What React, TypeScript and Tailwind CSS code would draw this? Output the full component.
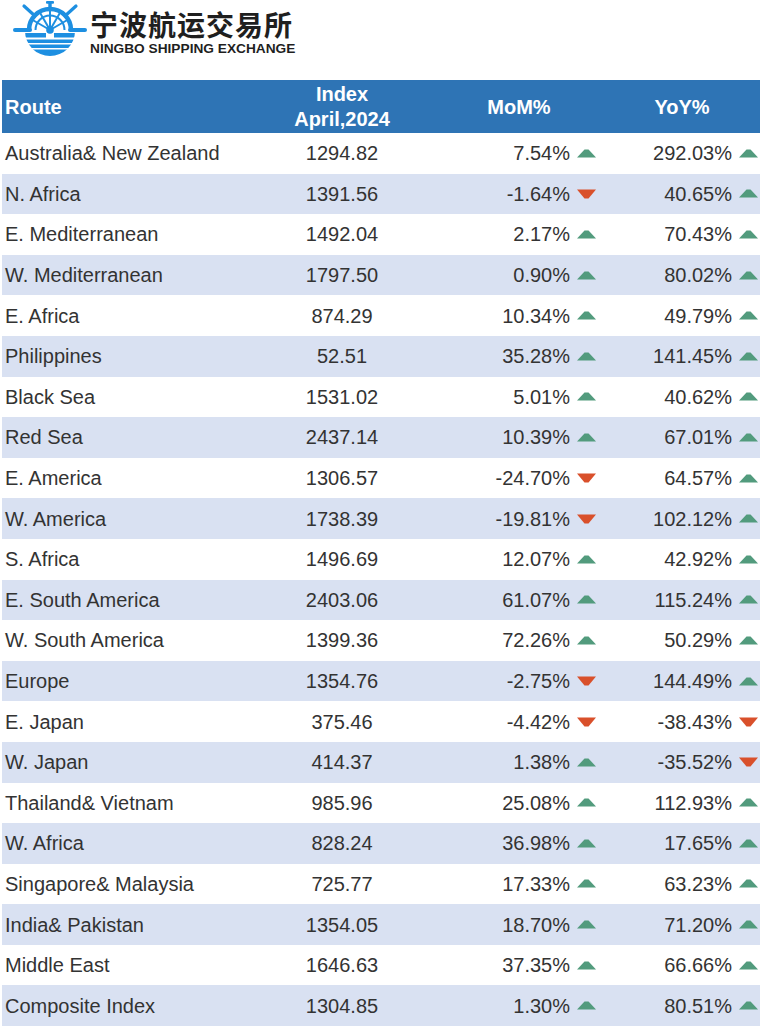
const rows: [string, string, string, boolean, string, boolean][] = [
  ['Australia& New Zealand', '1294.82', '7.54%', true, '292.03%', true],
  ['N. Africa', '1391.56', '-1.64%', false, '40.65%', true],
  ['E. Mediterranean', '1492.04', '2.17%', true, '70.43%', true],
  ['W. Mediterranean', '1797.50', '0.90%', true, '80.02%', true],
  ['E. Africa', '874.29', '10.34%', true, '49.79%', true],
  ['Philippines', '52.51', '35.28%', true, '141.45%', true],
  ['Black Sea', '1531.02', '5.01%', true, '40.62%', true],
  ['Red Sea', '2437.14', '10.39%', true, '67.01%', true],
  ['E. America', '1306.57', '-24.70%', false, '64.57%', true],
  ['W. America', '1738.39', '-19.81%', false, '102.12%', true],
  ['S. Africa', '1496.69', '12.07%', true, '42.92%', true],
  ['E. South America', '2403.06', '61.07%', true, '115.24%', true],
  ['W. South America', '1399.36', '72.26%', true, '50.29%', true],
  ['Europe', '1354.76', '-2.75%', false, '144.49%', true],
  ['E. Japan', '375.46', '-4.42%', false, '-38.43%', false],
  ['W. Japan', '414.37', '1.38%', true, '-35.52%', false],
  ['Thailand& Vietnam', '985.96', '25.08%', true, '112.93%', true],
  ['W. Africa', '828.24', '36.98%', true, '17.65%', true],
  ['Singapore& Malaysia', '725.77', '17.33%', true, '63.23%', true],
  ['India& Pakistan', '1354.05', '18.70%', true, '71.20%', true],
  ['Middle East', '1646.63', '37.35%', true, '66.66%', true],
  ['Composite Index', '1304.85', '1.30%', true, '80.51%', true],
];

function Arrow({ up }: { up: boolean }) {
  return up ? (
    <svg width="19" height="9" viewBox="0 0 19 9" className="shrink-0">
      <polygon points="0,8.5 7.5,0.5 11.5,0.5 19,8.5" fill="#529b7d" />
    </svg>
  ) : (
    <svg width="19" height="10" viewBox="0 0 19 10" className="shrink-0">
      <polygon points="0,0.5 19,0.5 11.5,9.5 7.5,9.5" fill="#d9502b" />
    </svg>
  );
}

function Logo() {
  const c = '#1d8fe1';
  const spokes = [30, 60, 90, 120, 150];
  return (
    <svg width="80" height="60" viewBox="10 0 80 60" className="shrink-0">
      <defs>
        <clipPath id="bowl">
          <circle cx="50" cy="31" r="25" />
        </clipPath>
      </defs>
      {/* handles */}
      <rect x="48.3" y="1" width="3.4" height="9" fill={c} />
      <rect x="46" y="1" width="8" height="2.8" rx="1" fill={c} />
      <line x1="15" y1="30" x2="30" y2="30" stroke={c} strokeWidth="4" strokeLinecap="round" />
      <line x1="70" y1="30" x2="85" y2="30" stroke={c} strokeWidth="4" strokeLinecap="round" />
      <line x1="24" y1="6" x2="35" y2="16" stroke={c} strokeWidth="3.2" strokeLinecap="round" />
      <line x1="76" y1="6" x2="65" y2="16" stroke={c} strokeWidth="3.2" strokeLinecap="round" />
      {/* rings */}
      <path d="M29 30 A21 21 0 0 1 71 30" fill="none" stroke={c} strokeWidth="4.5" />
      <path d="M35.5 30 A14.5 14.5 0 0 1 64.5 30" fill="none" stroke={c} strokeWidth="2" />
      {spokes.map((a) => {
        const r = (a * Math.PI) / 180;
        return (
          <line
            key={a}
            x1="50"
            y1="30"
            x2={50 + Math.cos(r) * 20}
            y2={30 - Math.sin(r) * 20}
            stroke={c}
            strokeWidth="2"
          />
        );
      })}
      <circle cx="50" cy="30" r="3.8" fill={c} />
      {/* water */}
      <g clipPath="url(#bowl)" fill={c}>
        <rect x="20" y="33" width="26" height="4.5" />
        <rect x="54" y="33" width="26" height="4.5" />
        <rect x="20" y="39.5" width="60" height="3.5" />
        <rect x="20" y="44.5" width="60" height="3.5" />
        <rect x="20" y="49.5" width="60" height="8" />
      </g>
    </svg>
  );
}

export default function App() {
  return (
    <div className="w-[761px] h-[1028px] bg-white text-[#333333] font-['Liberation_Sans',Arial,sans-serif] overflow-hidden">
      <div className="h-[80px] flex items-start pl-[10px]">
        <Logo />
        <div className="flex flex-col w-[210px] pt-[10px]">
          <div className="text-[28px] leading-[28px] font-bold text-[#1f1f1f] tracking-[1px] font-['Noto_Sans_CJK_SC',sans-serif]">
            宁波航运交易所
          </div>
          <div className="mt-[3px] text-[13.7px] leading-[15px] font-bold text-[#1f1f1f] whitespace-nowrap">
            NINGBO SHIPPING EXCHANGE
          </div>
        </div>
      </div>
      <div className="ml-[2px] w-[758px]">
        <div className="grid grid-cols-[248px_184px_170px_156px] h-[53px] bg-[#2e74b5] text-white font-bold text-[20px]">
          <div className="flex items-center pl-[3px]">Route</div>
          <div className="flex flex-col items-center justify-center leading-[25px]">
            <span>Index</span>
            <span>April,2024</span>
          </div>
          <div className="flex items-center justify-center">MoM%</div>
          <div className="flex items-center justify-center">YoY%</div>
        </div>
        {rows.map(([route, idx, mom, momUp, yoy, yoyUp], i) => (
          <div
            key={route}
            className={`grid grid-cols-[248px_184px_170px_156px] h-[40.6px] text-[20px] ${
              i % 2 === 1 ? 'bg-[#d9e1f2]' : 'bg-white'
            }`}
          >
            <div className="flex items-center pl-[3px] whitespace-nowrap">{route}</div>
            <div className="flex items-center justify-center">{idx}</div>
            <div className="flex items-center justify-end gap-[7px] pr-[8px]">
              <span>{mom}</span>
              <Arrow up={momUp} />
            </div>
            <div className="flex items-center justify-end gap-[7px] pr-[2px]">
              <span>{yoy}</span>
              <Arrow up={yoyUp} />
            </div>
          </div>
        ))}
      </div>
    </div>
  );
}
